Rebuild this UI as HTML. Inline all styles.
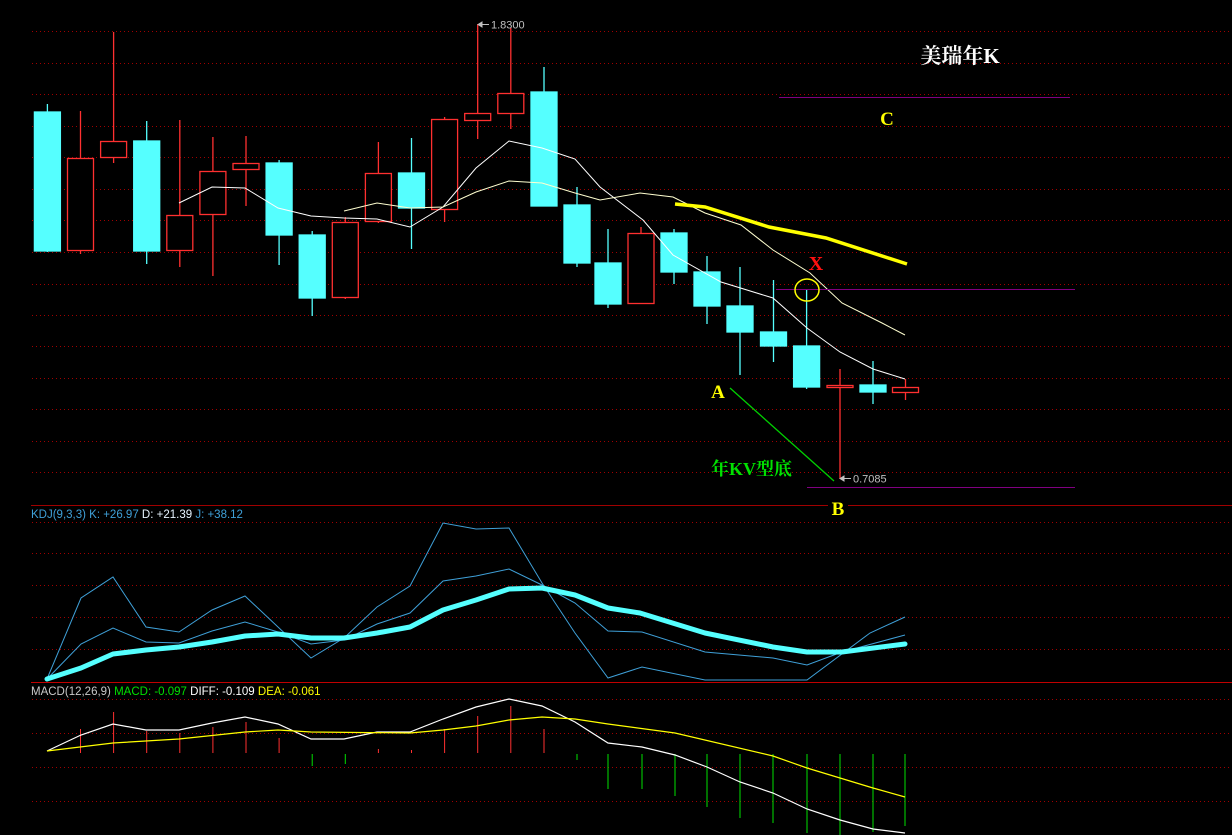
<!DOCTYPE html>
<html><head><meta charset="utf-8"><style>
html,body{margin:0;padding:0;background:#000;width:1232px;height:835px;overflow:hidden}
svg{display:block}
</style></head><body>
<svg width="1232" height="835" viewBox="0 0 1232 835" xmlns="http://www.w3.org/2000/svg" font-family="Liberation Sans, sans-serif">
<rect width="1232" height="835" fill="#000"/>
<g stroke="#a00000" stroke-width="1" stroke-dasharray="1,3">
<line x1="32" y1="31.5" x2="1232" y2="31.5"/>
<line x1="32" y1="63.5" x2="1232" y2="63.5"/>
<line x1="32" y1="94.5" x2="1232" y2="94.5"/>
<line x1="32" y1="126.5" x2="1232" y2="126.5"/>
<line x1="32" y1="157.5" x2="1232" y2="157.5"/>
<line x1="32" y1="189.5" x2="1232" y2="189.5"/>
<line x1="32" y1="220.5" x2="1232" y2="220.5"/>
<line x1="32" y1="252.5" x2="1232" y2="252.5"/>
<line x1="32" y1="284.5" x2="1232" y2="284.5"/>
<line x1="32" y1="315.5" x2="1232" y2="315.5"/>
<line x1="32" y1="346.5" x2="1232" y2="346.5"/>
<line x1="32" y1="378.5" x2="1232" y2="378.5"/>
<line x1="32" y1="409.5" x2="1232" y2="409.5"/>
<line x1="32" y1="441.5" x2="1232" y2="441.5"/>
<line x1="32" y1="472.5" x2="1232" y2="472.5"/>
<line x1="32" y1="522.5" x2="1232" y2="522.5"/>
<line x1="32" y1="553.5" x2="1232" y2="553.5"/>
<line x1="32" y1="585.5" x2="1232" y2="585.5"/>
<line x1="32" y1="617.5" x2="1232" y2="617.5"/>
<line x1="32" y1="649.5" x2="1232" y2="649.5"/>
<line x1="32" y1="699.5" x2="1232" y2="699.5"/>
<line x1="32" y1="733.5" x2="1232" y2="733.5"/>
<line x1="32" y1="767.5" x2="1232" y2="767.5"/>
<line x1="32" y1="801.5" x2="1232" y2="801.5"/>
</g>
<line x1="31" y1="505.5" x2="1232" y2="505.5" stroke="#a00000"/>
<line x1="31" y1="682.5" x2="1232" y2="682.5" stroke="#c00000"/>

<!-- candles -->
<g stroke-width="1.3">
<!-- i: cx -->
<g stroke="#5ff">
<line x1="47.4" y1="104" x2="47.4" y2="252"/><rect x="34.4" y="112" width="26" height="139" fill="#5ff"/>
<line x1="146.7" y1="121" x2="146.7" y2="264"/><rect x="133.7" y="141" width="26" height="110" fill="#5ff"/>
<line x1="279.1" y1="160" x2="279.1" y2="265"/><rect x="266.1" y="163" width="26" height="72" fill="#5ff"/>
<line x1="312.2" y1="231" x2="312.2" y2="316"/><rect x="299.2" y="235" width="26" height="63" fill="#5ff"/>
<line x1="411.5" y1="138" x2="411.5" y2="249"/><rect x="398.5" y="173" width="26" height="35" fill="#5ff"/>
<line x1="544" y1="67" x2="544" y2="206"/><rect x="531" y="92" width="26" height="114" fill="#5ff"/>
<line x1="577" y1="187" x2="577" y2="267"/><rect x="564" y="205" width="26" height="58" fill="#5ff"/>
<line x1="608" y1="229" x2="608" y2="308"/><rect x="595" y="263" width="26" height="41" fill="#5ff"/>
<line x1="674" y1="229" x2="674" y2="284"/><rect x="661" y="233" width="26" height="39" fill="#5ff"/>
<line x1="707" y1="256" x2="707" y2="324"/><rect x="694" y="272" width="26" height="34" fill="#5ff"/>
<line x1="740" y1="267" x2="740" y2="375"/><rect x="727" y="306" width="26" height="26" fill="#5ff"/>
<line x1="773.5" y1="280" x2="773.5" y2="362"/><rect x="760.5" y="332" width="26" height="14" fill="#5ff"/>
<line x1="806.6" y1="290" x2="806.6" y2="389"/><rect x="793.6" y="346" width="26" height="41" fill="#5ff"/>
<line x1="873" y1="361" x2="873" y2="404"/><rect x="860" y="385" width="26" height="7" fill="#5ff"/>
</g>
<g stroke="#ff3030" fill="#000">
<line x1="80.5" y1="111" x2="80.5" y2="254"/><rect x="67.5" y="158.5" width="26" height="92"/>
<line x1="113.6" y1="32" x2="113.6" y2="163"/><rect x="100.6" y="141.5" width="26" height="16"/>
<line x1="179.8" y1="120" x2="179.8" y2="267"/><rect x="166.8" y="215.5" width="26" height="35"/>
<line x1="212.9" y1="137" x2="212.9" y2="276"/><rect x="199.9" y="171.5" width="26" height="43"/>
<line x1="246" y1="136" x2="246" y2="206"/><rect x="233" y="163.5" width="26" height="6"/>
<line x1="345.3" y1="217" x2="345.3" y2="299"/><rect x="332.3" y="222.5" width="26" height="75"/>
<line x1="378.4" y1="142" x2="378.4" y2="223"/><rect x="365.4" y="173.5" width="26" height="48"/>
<line x1="444.6" y1="117" x2="444.6" y2="222"/><rect x="431.6" y="119.5" width="26" height="90"/>
<line x1="477.7" y1="24" x2="477.7" y2="139"/><rect x="464.7" y="113.5" width="26" height="7"/>
<line x1="510.8" y1="28" x2="510.8" y2="129"/><rect x="497.8" y="93.5" width="26" height="20"/>
<line x1="641" y1="227" x2="641" y2="304"/><rect x="628" y="233.5" width="26" height="70"/>
<line x1="840" y1="369" x2="840" y2="479"/><rect x="827" y="385.5" width="26" height="2"/>
<line x1="905.5" y1="379" x2="905.5" y2="400"/><rect x="892.5" y="387.5" width="26" height="5"/>
</g>
</g>

<!-- MAs -->
<polyline fill="none" stroke="#fff" stroke-width="1" points="179,203 212,187 245,188 278,208 311,216 344,218 377,219 410,227 443,207 476,168 509,141 542,148 575,159 600,187 643,220 673,255 721,282 773,298 807,328 840,352 873,369 905,379"/>
<polyline fill="none" stroke="#ffffd0" stroke-width="1" points="344,211 377,203 410,208 443,207 476,192 509,181 542,183 575,193 600,200 640,193 673,197 705,213 741,225 773,250 810,273 842,303 882,323 905,335"/>
<polyline fill="none" stroke="#ffff00" stroke-width="3.5" points="675,204 705,207 769,227 826,238 907,264"/>

<!-- annotations -->
<line x1="779" y1="97.5" x2="1070" y2="97.5" stroke="#800080"/>
<line x1="776" y1="289.5" x2="1075" y2="289.5" stroke="#800080"/>
<line x1="807" y1="487.5" x2="1075" y2="487.5" stroke="#800080"/>
<ellipse cx="807" cy="290" rx="12" ry="11" fill="none" stroke="#ffff00" stroke-width="1.5"/>
<line x1="730" y1="388" x2="834" y2="481" stroke="#00d000" stroke-width="1.3"/>
<text x="960" y="63" fill="#fff" font-size="21" font-weight="bold" text-anchor="middle" font-family="Liberation Serif, Noto Serif CJK SC, serif">美瑞年K</text>
<text x="887" y="125" fill="#ffff00" font-size="19" font-weight="bold" text-anchor="middle" font-family="Liberation Serif, serif">C</text>
<text x="816" y="270" fill="#ff1010" font-size="20" font-weight="bold" text-anchor="middle" font-family="Liberation Serif, serif">X</text>
<text x="718" y="398" fill="#ffff00" font-size="19" font-weight="bold" text-anchor="middle" font-family="Liberation Serif, serif">A</text>
<text x="711" y="475" fill="#00e000" font-size="18" font-weight="bold" font-family="Liberation Serif, Noto Serif CJK SC, serif">年KV型底</text>
<rect x="828" y="496" width="20" height="20" fill="#000"/>
<text x="838" y="515" fill="#ffff00" font-size="19" font-weight="bold" text-anchor="middle" font-family="Liberation Serif, serif">B</text>
<g stroke="#c0c0c0" fill="#c0c0c0">
<line x1="479" y1="24.5" x2="489" y2="24.5"/><path d="M478 24.5 L482 22 L482 27 Z"/>
<line x1="841" y1="478.5" x2="851" y2="478.5"/><path d="M840 478.5 L844 476 L844 481 Z"/>
</g>
<text x="491" y="28.5" fill="#c0c0c0" font-size="11">1.8300</text>
<text x="853" y="482.5" fill="#c0c0c0" font-size="11">0.7085</text>

<!-- KDJ -->
<rect x="29" y="507" width="228" height="14" fill="#000"/>
<text x="31" y="518" font-size="11.5" fill="#3fa0d8">KDJ(9,3,3) K: +26.97 <tspan fill="#e8f4ff">D: +21.39</tspan> J: +38.12</text>
<polyline fill="none" stroke="#3fa0d8" stroke-width="1" points="47,679 81,598 113,577 146,627 179,632 212,610 245,596 278,627 311,658 344,638 377,607 410,586 443,523 476,529 509,528 542,583 575,633 608,678 642,667 705,680 807,680 870,633 905,617"/>
<polyline fill="none" stroke="#3fa0d8" stroke-width="1" points="47,679 81,644 113,628 146,642 179,643 212,631 245,622 278,632 311,644 344,640 377,624 410,613 443,581 476,576 509,569 542,585 575,603 608,631 642,632 705,652 773,658 807,665 842,652 905,635"/>
<polyline fill="none" stroke="#5ff" stroke-width="5" stroke-linejoin="round" stroke-linecap="round" points="47,679 81,668 113,654 146,650 179,647 212,642 245,636 278,634 311,638 344,638 377,633 410,627 443,610 476,600 509,589 542,588 575,595 608,608 640,613 705,633 773,647 807,652 842,652 905,644"/>

<!-- MACD -->
<rect x="29" y="684" width="305" height="14" fill="#000"/>
<text x="31" y="695" font-size="11.5" fill="#c8c8c8">MACD(12,26,9) <tspan fill="#00e000">MACD: -0.097</tspan> <tspan fill="#fff">DIFF: -0.109</tspan> <tspan fill="#ffff00">DEA: -0.061</tspan></text>
<g stroke="#ff3030" stroke-width="1">
<line x1="80.5" y1="729" x2="80.5" y2="753"/><line x1="113.6" y1="712" x2="113.6" y2="753"/>
<line x1="146.7" y1="731" x2="146.7" y2="753"/><line x1="179.8" y1="733" x2="179.8" y2="753"/>
<line x1="212.9" y1="727" x2="212.9" y2="753"/><line x1="246" y1="722" x2="246" y2="753"/>
<line x1="279.1" y1="738" x2="279.1" y2="753"/><line x1="378.4" y1="749" x2="378.4" y2="753"/>
<line x1="411.5" y1="750" x2="411.5" y2="753"/><line x1="444.6" y1="729" x2="444.6" y2="753"/>
<line x1="477.7" y1="716" x2="477.7" y2="753"/><line x1="510.8" y1="706" x2="510.8" y2="753"/>
<line x1="544" y1="729" x2="544" y2="753"/>
</g>
<g stroke="#00e000" stroke-width="1">
<line x1="312.2" y1="754" x2="312.2" y2="766"/><line x1="345.3" y1="754" x2="345.3" y2="764"/>
<line x1="577" y1="754" x2="577" y2="760"/><line x1="608" y1="754" x2="608" y2="789"/>
<line x1="642" y1="754" x2="642" y2="789"/><line x1="675" y1="754" x2="675" y2="796"/>
<line x1="707" y1="754" x2="707" y2="807"/><line x1="740" y1="754" x2="740" y2="818"/>
<line x1="773" y1="754" x2="773" y2="823"/><line x1="807" y1="754" x2="807" y2="833"/>
<line x1="840" y1="754" x2="840" y2="835"/><line x1="873" y1="754" x2="873" y2="832"/>
<line x1="905" y1="754" x2="905" y2="826"/>
</g>
<polyline fill="none" stroke="#fff" stroke-width="1.2" points="47,751 81,735 113,724 146,730 179,730 212,723 245,717 278,724 311,739 344,739 377,732 410,732 443,719 476,707 509,699 542,706 575,722 608,743 642,747 675,755 707,767 740,782 773,793 807,809 840,820 873,829 905,833"/>
<polyline fill="none" stroke="#ffff00" stroke-width="1.2" points="47,751 113,743 179,739 245,732 278,730 311,732 410,733 443,730 476,726 509,720 542,717 575,719 608,724 675,733 773,756 807,768 840,778 873,788 905,797"/>
</svg>
</body></html>
